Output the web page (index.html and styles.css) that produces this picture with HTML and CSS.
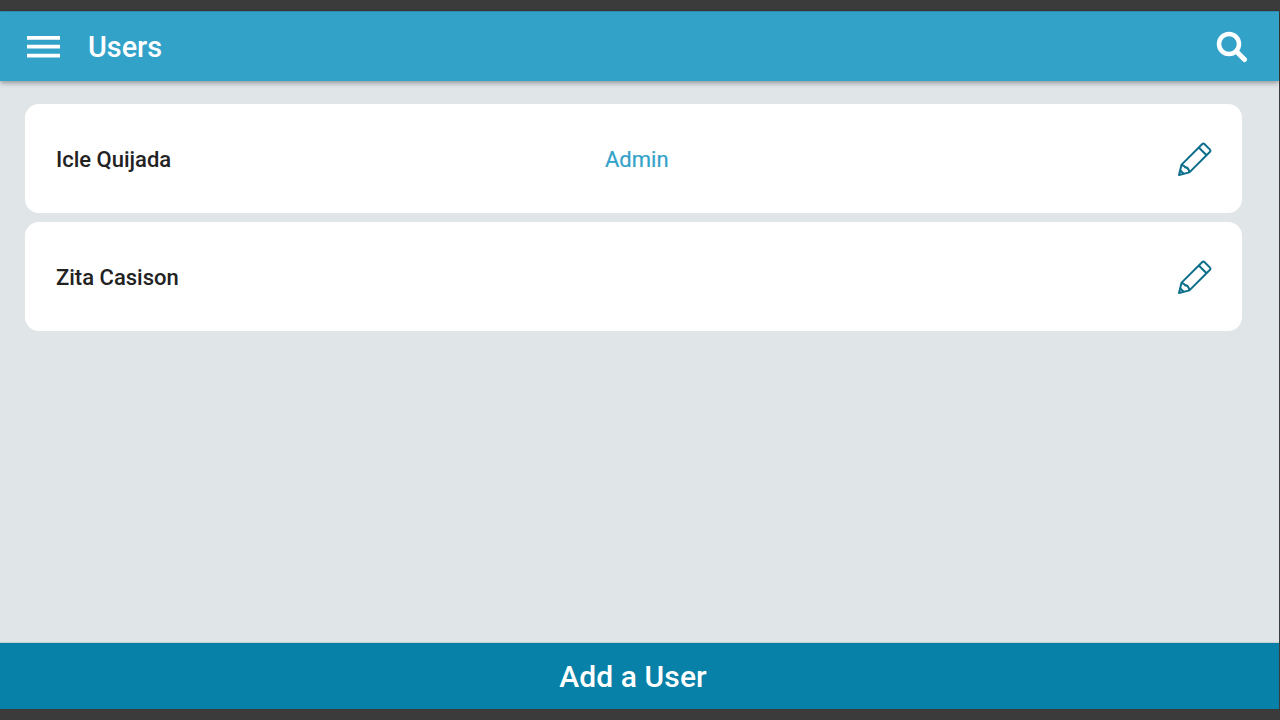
FILE: index.html
```html
<!DOCTYPE html>
<html lang="en">
<head>
<meta charset="utf-8">
<title>Users</title>
<link rel="stylesheet" href="styles.css">
</head>
<body>
<div class="screen">
  <header class="appbar">
    <svg class="menu-icon" viewBox="0 0 33 24" aria-hidden="true"><path d="M0 1h33v3.800H0zM0 9.800h33v3.800H0zM0 18.700h33v3.800H0z"/></svg>
    <h1 class="title">Users</h1>
    <svg class="search-icon" viewBox="0 0 32 32" aria-hidden="true"><circle cx="13" cy="13" r="10" class="lens"/><path d="M20.500 20.500l8 8" class="handle"/></svg>
  </header>
  <main class="list">
    <article class="card">
      <span class="name">Icle Quijada</span>
      <span class="role">Admin</span>
      <svg class="edit" viewBox="0 0 36 36" aria-hidden="true"><path d="M2 34l2.600-10.400L25.300 3a1.500 1.500 0 0 1 2.100 0l5.600 5.600a1.500 1.500 0 0 1 0 2.100L12.400 31.400zM21.800 6.500l7.700 7.700M4.800 24c1.800.4 3 1.200 3.400 2.400 1.600-.2 3.400 1 4.200 5M3.400 29.500l3 3"/></svg>
    </article>
    <article class="card">
      <span class="name">Zita Casison</span>
      <span class="role"></span>
      <svg class="edit" viewBox="0 0 36 36" aria-hidden="true"><path d="M2 34l2.600-10.400L25.300 3a1.500 1.500 0 0 1 2.100 0l5.600 5.600a1.500 1.500 0 0 1 0 2.100L12.400 31.400zM21.800 6.500l7.700 7.700M4.800 24c1.800.4 3 1.200 3.400 2.400 1.600-.2 3.400 1 4.200 5M3.400 29.500l3 3"/></svg>
    </article>
  </main>
  <button class="add" type="button">Add a User</button>
</div>
</body>
</html>
```
FILE: styles.css
```css
* { box-sizing: border-box; }
html, body { margin: 0; height: 100%; }
body { background: #3b3b3b; font-family: Roboto, "Liberation Sans", sans-serif; overflow: hidden; }
.screen { width: 1279px; height: 720px; padding: 11px 0; display: flex; flex-direction: column; }
.appbar {
  height: 70px; flex: none; display: flex; align-items: center; padding: 0 31px 0 27px;
  background: #33a2c9; border-top: 1px solid #2b8cb0;
  box-shadow: 0 2px 5px rgba(0,0,0,.35); position: relative; z-index: 1;
}
.menu-icon { width: 33px; height: 24px; fill: #fff; flex: none; }
.title { margin: 2px 0 0 28px; color: #fff; font-size: 28.800px; font-weight: 500; flex: 1; line-height: 1; }
.search-icon { width: 32px; height: 32px; flex: none; fill: none; stroke: #fff; }
.lens { stroke-width: 4.500; }
.handle { stroke-width: 5; stroke-linecap: round; }
.list { flex: 1; background: #e0e5e8; padding: 23px 37px 0 25px; display: flex; flex-direction: column; gap: 9px; }
.card {
  height: 109px; background: #fff; border-radius: 14px; display: grid;
  grid-template-columns: 549px 1fr auto; align-items: center; padding: 2px 29px 0 31px;
}
.name { font-size: 22px; font-weight: 500; color: #222; }
.role { font-size: 22px; color: #33a2c9; -webkit-text-stroke: .2px #33a2c9; }
.edit { width: 36px; height: 36px; margin-top: -2px; fill: none; stroke: #0b6f8c; stroke-width: 2; stroke-linejoin: round; }
.add {
  height: 67px; flex: none; width: 100%; border: 0; border-top: 1px solid #c4d0d6; background: #0781a8;
  color: #fff; font: 500 30px Roboto, "Liberation Sans", sans-serif; padding: 0 13px 0 0; letter-spacing: .1px;
}
```
